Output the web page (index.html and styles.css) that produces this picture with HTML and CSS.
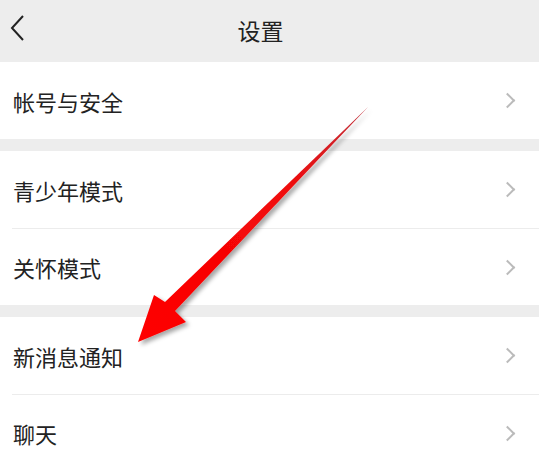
FILE: index.html
```html
<!DOCTYPE html>
<html>
  <head>
    <title>设置</title>
    <link rel="stylesheet" href="styles.css">
  </head>
  <body>
    <div class="page">
      <div class="header">
        <svg class="back" width="16" height="28" viewBox="0 0 16 28">
          <path d="M14 2 L3 14 L14 26" fill="none" stroke="#222" stroke-width="2"/>
        </svg>
        <h1>设置</h1>
      </div>

      <div class="group">
        <div class="row"><span>帐号与安全</span><i class="more"></i></div>
      </div>

      <div class="group">
        <div class="row"><span>青少年模式</span><i class="more"></i></div>
        <div class="row"><span>关怀模式</span><i class="more"></i></div>
      </div>

      <div class="group">
        <div class="row"><span>新消息通知</span><i class="more"></i></div>
        <div class="row"><span>聊天</span><i class="more"></i></div>
      </div>

      <!-- annotation arrow drawn over the list -->
      <svg class="arrow" width="539" height="451" viewBox="0 0 539 451">
        <defs>
          <filter id="shade" x="-20%" y="-20%" width="140%" height="140%">
            <feDropShadow dx="3" dy="3" stdDeviation="2" flood-color="#000" flood-opacity="0.35"/>
          </filter>
          <linearGradient id="red" x1="368" y1="107" x2="138" y2="342" gradientUnits="userSpaceOnUse">
            <stop offset="0" stop-color="#c0303a"/>
            <stop offset="0.35" stop-color="#f00a0a"/>
            <stop offset="1" stop-color="#ff0000"/>
          </linearGradient>
        </defs>
        <polygon points="368,107 175,311 186,322 138,342 154,295 165,302" fill="url(#red)" filter="url(#shade)"/>
      </svg>
    </div>
  </body>
</html>
```

FILE: styles.css
```css
body {
  margin: 0;
  background: #ededed;
  font-family: "Noto Sans CJK SC", "Noto Sans", sans-serif;
  color: #222;
}
.page {
  position: relative;
  width: 539px;
  height: 451px;
  overflow: hidden;
}
.header {
  height: 62px;
  display: flex;
  align-items: center;
  justify-content: center;
  position: relative;
}
.header h1 {
  margin: -2px 18px 0 0;
  font-size: 23px;
  font-weight: normal;
}
.back {
  position: absolute;
  left: 9px;
  top: 14px;
}
.group {
  background: #fff;
  margin-bottom: 12px;
}
.row {
  height: 76px;
  display: flex;
  align-items: center;
  justify-content: space-between;
  padding: 0 26px 0 13px;
  font-size: 22px;
  position: relative;
}
.group .row:first-child {
  height: 77px;
}
.row + .row {
  border-top: 1px solid #ececec;
  margin-left: 12px;
  padding-left: 1px;
}
.more {
  width: 9px;
  height: 9px;
  border-top: 2px solid #bbb;
  border-right: 2px solid #bbb;
  transform: rotate(45deg);
}
.arrow {
  position: absolute;
  left: 0;
  top: 0;
}
```
